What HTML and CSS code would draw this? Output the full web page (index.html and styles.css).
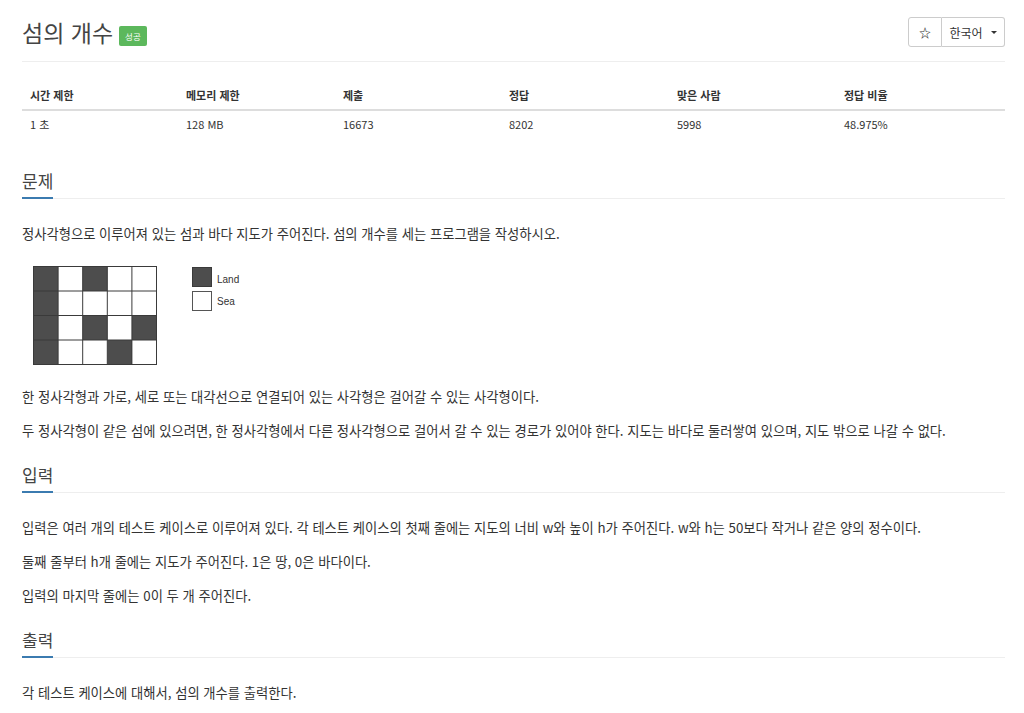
FILE: index.html
```html
<!DOCTYPE html>
<html lang="ko">
<head>
<meta charset="utf-8">
<title>섬의 개수</title>
<link rel="stylesheet" href="styles.css">
</head>
<body>
<div class="container">
  <div class="page-header">
    <h1 class="title">섬의 개수 <span class="badge">성공</span></h1>
    <div class="btn-group">
      <button class="btn btn-star">☆</button>
      <button class="btn btn-lang">한국어 <span class="caret"></span></button>
    </div>
  </div>

  <table class="info">
    <thead>
      <tr><th class="c1">시간 제한</th><th class="c2">메모리 제한</th><th class="c3">제출</th><th class="c4">정답</th><th class="c5">맞은 사람</th><th class="c6">정답 비율</th></tr>
    </thead>
    <tbody>
      <tr><td>1 초</td><td>128 MB</td><td>16673</td><td>8202</td><td>5998</td><td>48.975%</td></tr>
    </tbody>
  </table>

  <section class="problem-section">
    <div class="headline"><h2>문제</h2></div>
    <div class="text">
      <p>정사각형으로 이루어져 있는 섬과 바다 지도가 주어진다. 섬의 개수를 세는 프로그램을 작성하시오.</p>
      <p class="figure">
        <svg width="200" height="115" viewBox="0 0 200 115" xmlns="http://www.w3.org/2000/svg">
          <g fill="#4d4d4d">
            <rect x="11.5" y="8.5" width="24.6" height="24.5"/>
            <rect x="60.7" y="8.5" width="24.6" height="24.5"/>
            <rect x="11.5" y="33" width="24.6" height="24.5"/>
            <rect x="11.5" y="57.5" width="24.6" height="24.5"/>
            <rect x="60.7" y="57.5" width="24.6" height="24.5"/>
            <rect x="110" y="57.5" width="24.6" height="24.5"/>
            <rect x="11.5" y="82" width="24.6" height="24.5"/>
            <rect x="85.4" y="82" width="24.6" height="24.5"/>
          </g>
          <g stroke="#3a3a3a" stroke-width="1" fill="none">
            <rect x="11.5" y="8.5" width="123" height="98"/>
            <line x1="36.1" y1="8.5" x2="36.1" y2="106.5"/>
            <line x1="60.7" y1="8.5" x2="60.7" y2="106.5"/>
            <line x1="85.3" y1="8.5" x2="85.3" y2="106.5"/>
            <line x1="109.9" y1="8.5" x2="109.9" y2="106.5"/>
            <line x1="11.5" y1="33" x2="134.5" y2="33"/>
            <line x1="11.5" y1="57.5" x2="134.5" y2="57.5"/>
            <line x1="11.5" y1="82" x2="134.5" y2="82"/>
          </g>
          <rect x="170.5" y="9.5" width="19" height="19" fill="#4d4d4d" stroke="#3a3a3a"/>
          <rect x="170.5" y="33.5" width="19" height="19" fill="#fff" stroke="#555"/>
        </svg>
        <span class="legend legend-land">Land</span>
        <span class="legend legend-sea">Sea</span>
      </p>
      <p>한 정사각형과 가로, 세로 또는 대각선으로 연결되어 있는 사각형은 걸어갈 수 있는 사각형이다.</p>
      <p>두 정사각형이 같은 섬에 있으려면, 한 정사각형에서 다른 정사각형으로 걸어서 갈 수 있는 경로가 있어야 한다. 지도는 바다로 둘러쌓여 있으며, 지도 밖으로 나갈 수 없다.</p>
    </div>
  </section>

  <section class="problem-section">
    <div class="headline"><h2>입력</h2></div>
    <div class="text">
      <p>입력은 여러 개의 테스트 케이스로 이루어져 있다. 각 테스트 케이스의 첫째 줄에는 지도의 너비 w와 높이 h가 주어진다. w와 h는 50보다 작거나 같은 양의 정수이다.</p>
      <p>둘째 줄부터 h개 줄에는 지도가 주어진다. 1은 땅, 0은 바다이다.</p>
      <p>입력의 마지막 줄에는 0이 두 개 주어진다.</p>
    </div>
  </section>

  <section class="problem-section">
    <div class="headline"><h2>출력</h2></div>
    <div class="text">
      <p>각 테스트 케이스에 대해서, 섬의 개수를 출력한다.</p>
    </div>
  </section>
</div>
</body>
</html>
```

FILE: styles.css
```css
html, body {
  margin: 0;
  padding: 0;
  background: #fff;
}
body {
  font-family: "Noto Sans CJK KR", "Noto Sans", sans-serif;
  color: #333;
  font-size: 13.3px;
}
.container {
  width: 983px;
  padding: 0 19px 0 22px;
}
.page-header {
  display: flex;
  justify-content: space-between;
  align-items: center;
  padding-top: 17px;
  padding-bottom: 14px;
  border-bottom: 1px solid #eee;
}
.title {
  margin: 0;
  font-size: 23px;
  font-weight: 400;
  color: #444;
  line-height: 30px;
  display: flex;
  align-items: center;
  gap: 6px;
}
.badge {
  display: inline-block;
  background: #5cb85c;
  color: #fff;
  font-size: 8.5px;
  line-height: 20px;
  height: 20px;
  padding: 0 6px;
  border-radius: 2px;
  margin-top: 8px;
}
.btn-group {
  display: flex;
}
.btn {
  font-family: inherit;
  background: #fff;
  border: 1px solid #ccc;
  color: #333;
  height: 30px;
  margin: 0;
  padding: 0;
  font-size: 12px;
  display: flex;
  align-items: center;
  justify-content: center;
}
.btn-star {
  width: 34px;
  border-radius: 3px 0 0 3px;
  font-size: 12px;
  font-weight: 700;
}
.btn-lang {
  width: 63px;
  border-left: none;
  border-radius: 0 3px 3px 0;
  gap: 8px;
}
.caret {
  display: inline-block;
  width: 0;
  height: 0;
  border-left: 3px solid transparent;
  border-right: 3px solid transparent;
  border-top: 3px solid #333;
  margin-top: 1px;
}
.info {
  width: 983px;
  border-collapse: collapse;
  margin-top: 19px;
  margin-bottom: 32px;
  font-size: 11px;
}
.info th {
  text-align: left;
  font-weight: 700;
  padding: 5px 8px;
  line-height: 18px;
  border-bottom: 2px solid #ddd;
}
.info td {
  padding: 4px 8px;
  line-height: 18px;
}
.c1 { width: 140px; }
.c2 { width: 141px; }
.c3 { width: 150px; }
.c4 { width: 152px; }
.c5 { width: 151px; }
.c6 { width: 153px; }
.problem-section {
  margin-top: 22px;
}
.headline {
  border-bottom: 1px solid #eee;
}
.headline h2 {
  display: inline-block;
  margin: 0;
  font-size: 17px;
  font-weight: 400;
  color: #444;
  line-height: 24px;
  padding-bottom: 4px;
  border-bottom: 2px solid #3b7bb0;
  margin-bottom: -1px;
}
.text {
  padding-top: 25px;
}
.text p {
  margin: 0 0 14px;
  line-height: 20px;
}
.text p:last-child {
  margin-bottom: 0;
}
.figure {
  position: relative;
  height: 115px;
}
.figure svg {
  display: block;
}
.legend {
  position: absolute;
  font-family: "Liberation Sans", Arial, sans-serif;
  font-size: 10px;
  color: #333;
  left: 195px;
}
.legend-land { top: 12px; }
.legend-sea { top: 34px; }
```
